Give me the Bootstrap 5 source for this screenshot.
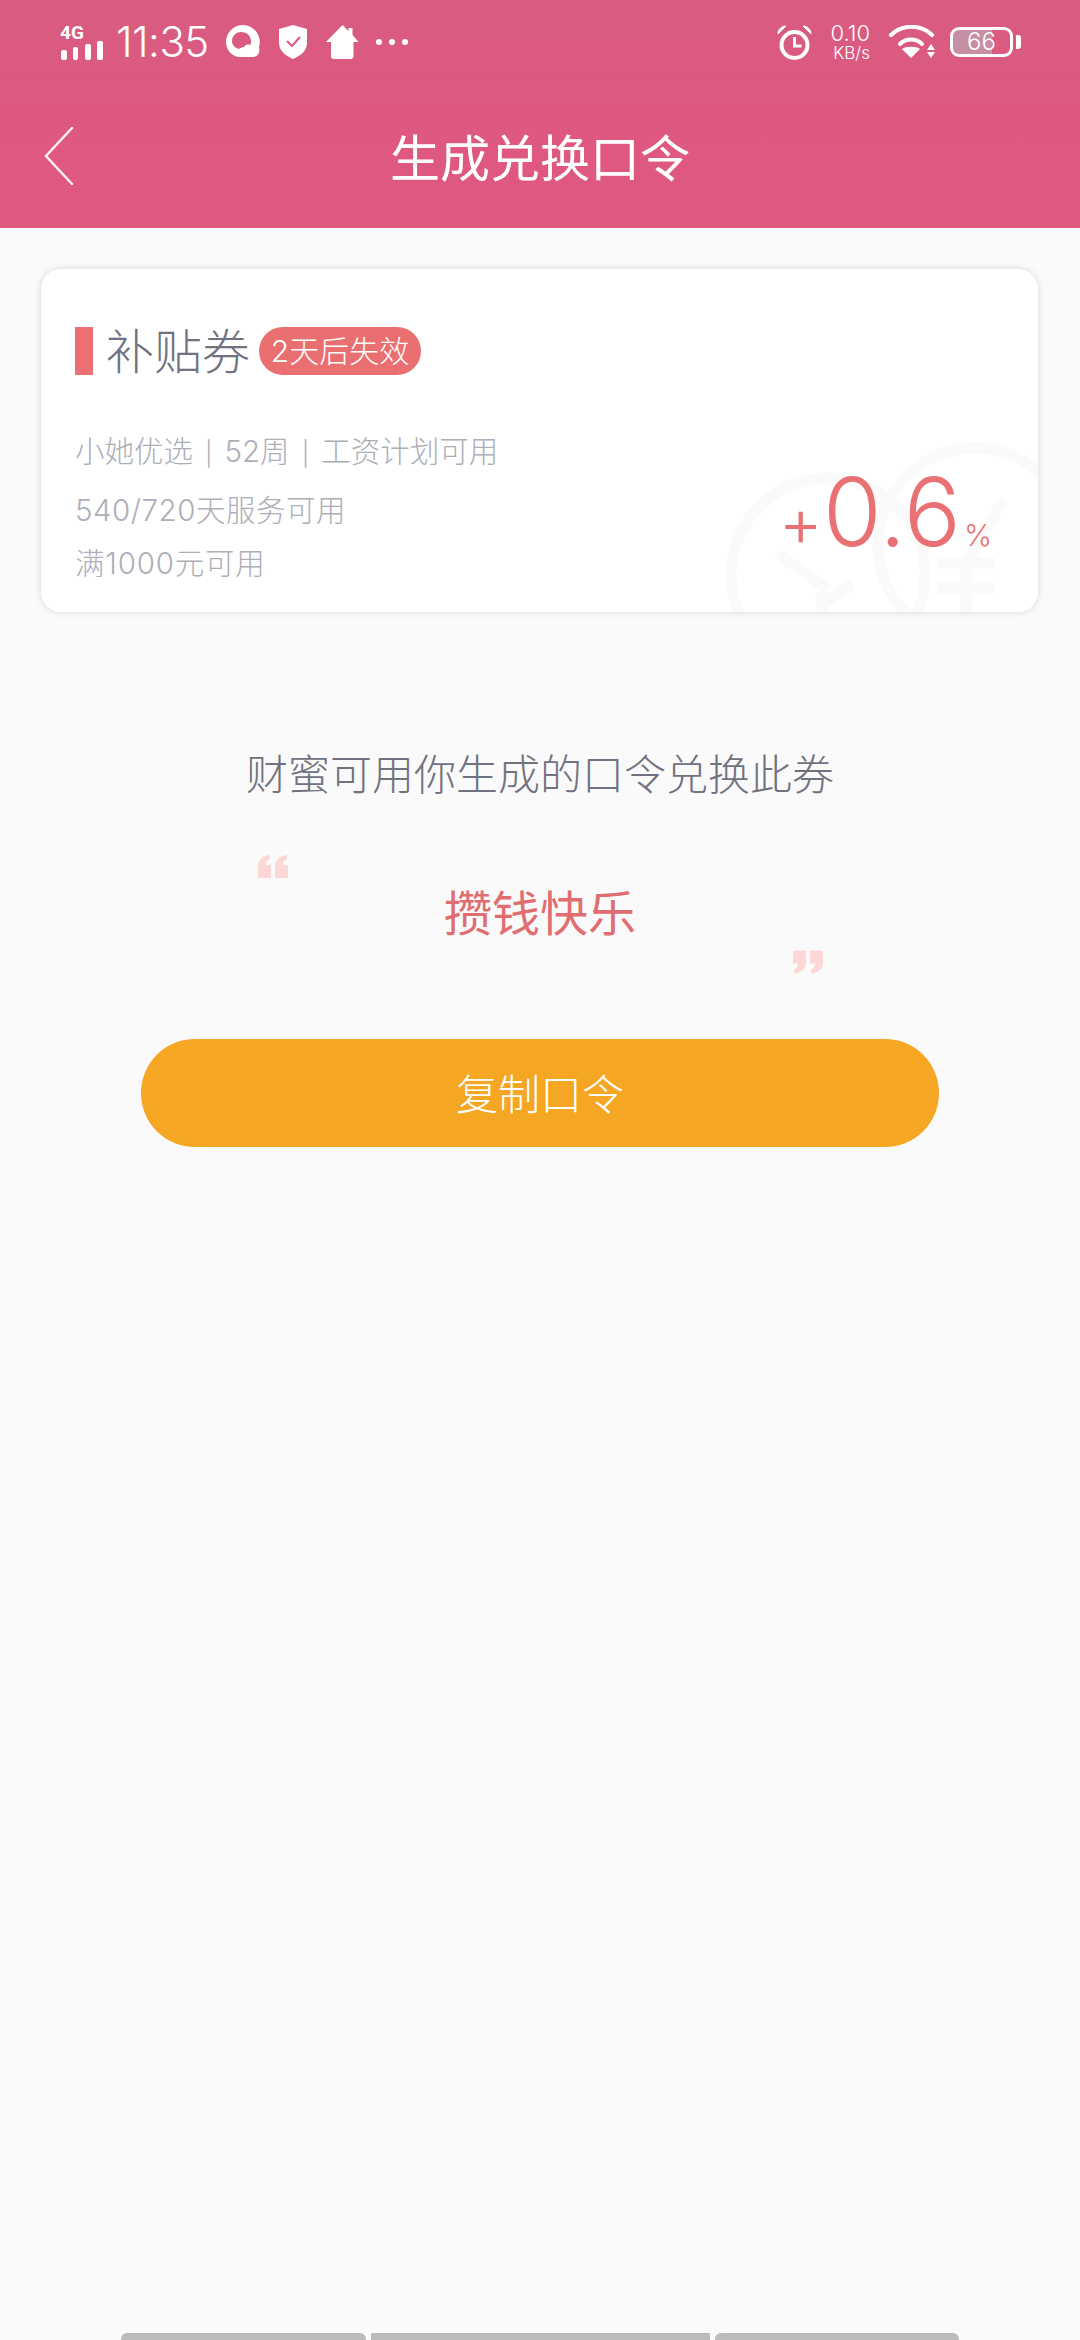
<!DOCTYPE html>
<html lang="zh">
<head>
    <meta charset="UTF-8">
    <title>生成兑换口令</title>
    <link rel="stylesheet" href="https://cdn.jsdelivr.net/npm/bootstrap@5.3.0/dist/css/bootstrap.min.css">
    <style>
        body { background: #fafafa; font-family: Inter, "Noto Sans CJK SC", sans-serif; font-weight: 300; height: 2340px; overflow: hidden; }
        .app-head { background: linear-gradient(#d95c80, #de5880 60%); color: #fff; height: 228px; }
        .status-row { height: 84px; padding-left: 60px; padding-right: 59px; }
        .sig-box { width: 43px; }
        .sig-label { font-family: Roboto, sans-serif; font-size: 19px; font-weight: 700; line-height: 16px; }
        .clock-text { font-size: 42px; line-height: 1; margin-left: 13px; width: 96px; margin-right: 14px; white-space: nowrap; letter-spacing: -.5px; }
        .net-speed { width: 43px; margin-left: 15px; margin-right: 18px; text-align: right; white-space: nowrap; }
        .net-speed div:first-child { font-size: 22px; line-height: 22px; }
        .net-speed div:last-child { font-size: 17px; line-height: 18px; }
        .batt-box { width: 63px; height: 30px; border: 3px solid #fff; border-radius: 9px; margin-left: 15px; font-size: 24px; line-height: 24px; text-align: center; background: linear-gradient(90deg, #c78fa4 68%, transparent 68%); background-clip: padding-box; }
        .batt-tip { width: 5px; height: 14px; background: #fff; border-radius: 0 3px 3px 0; margin-left: 3px; }
        .title-row { height: 144px; padding-left: 44px; }
        .title-text { font-size: 50px; font-weight: 400; left: 0; right: 0; top: 50px; line-height: 1; }
        .coupon-box { margin: 41px 42px 0 41px; height: 343px; background: #fff; border-radius: 20px; box-shadow: 0 0 7px rgba(0, 0, 0, .14); padding: 58px 0 0 34px; overflow: hidden; }
        .mark-bar { width: 18px; height: 48px; background: #ec7071; }
        .coupon-name { font-size: 48px; line-height: 50px; color: #71727f; margin-left: 13px; margin-right: 9px; }
        .expire-tag { background: #ea6f70; color: #fff; height: 48px; width: 162px; border-radius: 24px; font-size: 30px; line-height: 49px; text-align: center; }
        .rule-line { font-size: 29.500px; color: #aeaeb9; line-height: 40px; white-space: nowrap; }
        .rule-first { margin-top: 54px; }
        .rule-second { margin-top: 16px; letter-spacing: .5px; }
        .rule-third { margin-top: 13px; letter-spacing: .8px; }
        .rule-sep { margin: 0 12px; font-size: 24px; }
        .rate-num { right: 46px; bottom: 53px; color: #e97173; font-size: 95px; line-height: 1; font-weight: 300; white-space: nowrap; }
        .rate-num span { font-size: 68px; }
        .rate-num small { font-size: 30px; margin-left: 3px; }
        .coin-art { right: 0; bottom: 0; }
        .hint-text { font-size: 42px; color: #71727f; line-height: 1; margin-top: 142px; }
        .quote-open { margin: 59px 0 0 258px; }
        .quote-close { margin: 0 0 0 793px; }
        .pass-text { font-size: 48px; line-height: 48px; color: #e06d70; margin-top: 12px; margin-bottom: 12px; font-weight: 400; }
        .copy-btn { width: 798px; height: 108px; margin: 65px 0 0 141px; padding: 3px 0 0; border: 0; border-radius: 54px; background: #f5a623; color: #fff; font-size: 42px; font-weight: 300; display: block; }
        .nav-hint { height: 7px; margin-left: 121px; width: 838px; gap: 5px; }
        .nav-hint div { background: #bbb; }
    </style>
</head>

<body class="d-flex flex-column">
    <header class="app-head">
        <div class="status-row d-flex align-items-center">
            <div class="sig-box">
                <div class="sig-label">4G</div>
                <svg class="d-block" width="43" height="19" viewBox="0 0 43 19" fill="#fff">
                    <rect x="1" y="9" width="6" height="10" rx="2"/><rect x="13" y="6" width="5" height="13" rx="2"/><rect x="25" y="3" width="6" height="16" rx="2"/><rect x="37" y="0" width="6" height="19" rx="2"/>
                </svg>
            </div>
            <span class="clock-text">11:35</span>
            <svg width="34" height="34" viewBox="0 0 34 34" fill="#fff">
                <path d="M17 0a17 17 0 0 1 16 22c1 4 0 10-6 10H14C6 32 0 25 0 17A17 17 0 0 1 17 0z"/>
                <path d="M15 7c6 0 10 4 10 9 0 2 0 3-1 4-3-1-5 0-6 2-2 0-4 1-5 2-4-1-7-4-7-8 0-5 4-9 9-9z" fill="#db5a80"/>
            </svg>
            <svg style="margin-left:19px" width="28" height="34" viewBox="0 0 28 34" fill="#fff">
                <path d="M14 0l14 4v14c0 8-7 13-14 16C7 31 0 26 0 18V4z"/>
                <path d="M8 16l5 5 8-9" fill="none" stroke="#db5a80" stroke-width="2"/>
            </svg>
            <svg style="margin-left:19px" width="33" height="34" viewBox="0 0 33 34" fill="#fff">
                <path d="M16.500 0l6 6V3h4v7l6 7h-5v14a3 3 0 0 1-3 3H8a3 3 0 0 1-3-3V17H0z"/>
            </svg>
            <svg style="margin-left:16px" width="34" height="8" viewBox="0 0 34 8" fill="#fff">
                <circle cx="4" cy="4" r="3"/><circle cx="17" cy="4" r="3"/><circle cx="30" cy="4" r="3"/>
            </svg>
            <svg class="ms-auto" width="35" height="35" viewBox="0 0 35 35" fill="none" stroke="#fff">
                <circle cx="17.500" cy="20" r="13" stroke-width="4"/>
                <path d="M17.500 12v9h7" stroke-width="3"/>
                <path d="M1 9c0-5 4-8 8-8zM34 9c0-5-4-8-8-8z" fill="#fff" stroke-width="1"/>
            </svg>
            <div class="net-speed">
                <div>0.10</div>
                <div>KB/s</div>
            </div>
            <svg width="47" height="34" viewBox="0 0 47 34" fill="none" stroke="#fff" stroke-width="4" stroke-linecap="round">
                <path d="M3 10c11-11 30-11 41 0"/>
                <path d="M12 19c6-6 16-6 22 0"/>
                <path d="M14 24l9 9 9-9c-3-3-15-3-18 0z" fill="#fff" stroke="none"/>
                <path d="M39 25l4-6 4 6zM39 27h8l-4 6z" fill="#fff" stroke="none"/>
            </svg>
            <div class="batt-box">66</div>
            <div class="batt-tip"></div>
        </div>
        <div class="title-row d-flex align-items-center position-relative">
            <svg width="30" height="58" viewBox="0 0 30 58" fill="none" stroke="#fff" stroke-opacity=".9" stroke-width="2.500" stroke-linecap="round">
                <path d="M28 1L2 29l26 28"/>
            </svg>
            <div class="title-text position-absolute text-center">生成兑换口令</div>
        </div>
    </header>

    <section class="coupon-box position-relative">
        <svg class="coin-art position-absolute" width="320" height="170" viewBox="0 0 320 170" fill="none" stroke="#fafafa" stroke-width="11">
            <circle cx="110" cy="133" r="97"/>
            <circle cx="257" cy="103" r="97"/>
            <path d="M219 121h58M219 146h58M248 121v49M285 58l-37 63M60 112l50 35M105 170l-2-20M135 142l-30 20"/>
        </svg>
        <div class="d-flex">
            <div class="mark-bar"></div>
            <div class="coupon-name">补贴券</div>
            <div class="expire-tag">2天后失效</div>
        </div>
        <div class="rule-line rule-first position-relative">小她优选<span class="rule-sep">|</span>52周<span class="rule-sep">|</span>工资计划可用</div>
        <div class="rule-line rule-second position-relative">540/720天服务可用</div>
        <div class="rule-line rule-third position-relative">满1000元可用</div>
        <div class="rate-num position-absolute"><span>+</span>0.6<small>%</small></div>
    </section>

    <div class="hint-text text-center">财蜜可用你生成的口令兑换此券</div>
    <svg class="quote-open" width="30" height="23" viewBox="0 0 30 23" fill="#fdd6d6">
        <path d="M0 23V11C0 5 4 1 12 0v4c-3 1-4 3-4 6h5v13zM17 23V11c0-6 4-10 12-11v4c-3 1-4 3-4 6h5v13z"/>
    </svg>
    <div class="pass-text text-center">攒钱快乐</div>
    <svg class="quote-close" width="30" height="24" viewBox="0 0 30 23" fill="#fdd6d6">
        <path d="M30 0v12c0 6-4 10-12 11v-4c3-1 4-3 4-6h-5V0zM13 0v12c0 6-4 10-12 11v-4c3-1 4-3 4-6H0V0z"/>
    </svg>
    <button type="button" class="copy-btn">复制口令</button>

    <div class="nav-hint d-flex mt-auto">
        <div class="rounded-top" style="width:245px"></div>
        <div style="width:339px"></div>
        <div class="rounded-top" style="width:244px"></div>
    </div>
</body>
</html>
